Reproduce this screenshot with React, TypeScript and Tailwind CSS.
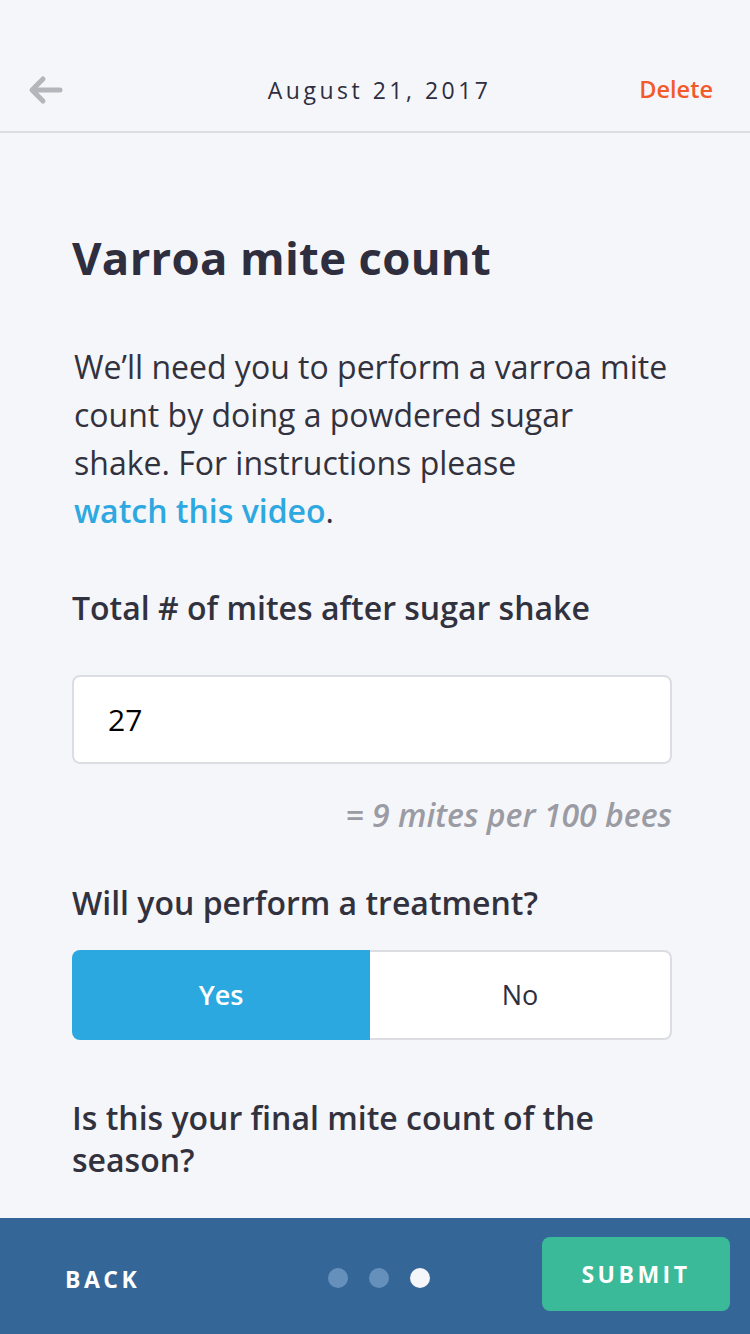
import { useState } from "react";

const Dot = ({ active }: { active?: boolean }) => (
  <span className={`block w-[20px] h-[20px] rounded-full ${active ? "bg-[#f5f6fa]" : "bg-[#6690bc]"}`} />
);

const App = () => {
  const [treat, setTreat] = useState(true);

  const seg = (on: boolean, side: "l" | "r") =>
    on
      ? `bg-[#2ca8e0] text-white font-semibold ${side === "l" ? "rounded-l-[8px]" : "rounded-r-[8px]"}`
      : `bg-white text-[#2e2e3f] border-2 border-[#dcdde3] ${side === "l" ? "rounded-l-[8px] border-r-0" : "rounded-r-[8px] border-l-0"}`;

  return (
    <div className="w-[750px] h-[1334px] bg-[#f5f6fa] flex flex-col font-['Open_Sans',sans-serif] text-[#32323f]">
      <header className="h-[133px] flex items-end border-b-2 border-[#dcdde3]">
        <div className="w-full h-[84px] flex items-center justify-between pl-[28px] pr-[37px] pt-[2px]">
          <svg width="36" height="30" viewBox="0 0 36 30" fill="none" stroke="#b4b6bb" strokeWidth="5" strokeLinecap="round" strokeLinejoin="round">
            <path d="M32 15H5M15 4L4 15l11 11" />
          </svg>
          <span className="text-[23px] font-medium tracking-[3.5px] ml-[56px] text-[#2e2e3f]">August 21, 2017</span>
          <span className="text-[23.5px] font-semibold text-[#f25a2a]">Delete</span>
        </div>
      </header>

      <main className="flex-1 px-[72px] pt-[92px]">
        <h1 className="text-[45.5px] font-bold leading-[64px] tracking-[0.3px] text-[#2e2e3f]">Varroa mite count</h1>
        <p className="mt-[54px] text-[32px] leading-[48px] text-[#32323f] pl-[2px]">
          We’ll need you to perform a varroa mite
          <br />
          count by doing a powdered sugar
          <br />
          shake. For instructions please
          <br />
          <a className="text-[#2ea8e0] font-semibold">watch this video</a>.
        </p>

        <label className="block mt-[49px] text-[32px] font-semibold leading-[48px]">Total # of mites after sugar shake</label>
        <div className="mt-[43px] w-[600px] h-[89px] bg-white border-2 border-[#dcdde3] rounded-[8px] flex items-center pl-[34px]">
          <span className="text-[30px] text-black">27</span>
        </div>
        <p className="mt-[27px] w-[600px] text-right text-[32px] italic font-semibold text-[#9a9ba3] leading-[48px]">
          = 9 mites per 100 bees
        </p>

        <p className="mt-[40px] text-[32px] font-semibold leading-[48px]">Will you perform a treatment?</p>
        <div className="mt-[23px] w-[600px] h-[90px] flex">
          <button onClick={() => setTreat(true)} className={`w-[298px] text-[27px] ${seg(treat, "l")}`}>
            Yes
          </button>
          <button onClick={() => setTreat(false)} className={`flex-1 text-[27px] ${seg(!treat, "r")}`}>
            No
          </button>
        </div>

        <p className="mt-[57px] text-[32px] font-semibold leading-[42px] w-[580px]">Is this your final mite count of the season?</p>
      </main>

      <footer className="h-[116px] bg-[#346698] flex items-center pl-[65px] pr-[20px]">
        <span className="text-[23px] font-bold tracking-[3.5px] text-white mt-[7px] w-[220px]">BACK</span>
        <div className="flex gap-[21px] items-center mt-[3px] ml-[43px]">
          <Dot />
          <Dot />
          <Dot active />
        </div>
        <button className="ml-auto w-[188px] h-[74px] rounded-[8px] bg-[#3aba98] text-white text-[23px] font-bold tracking-[3.5px] mb-[4px]">
          SUBMIT
        </button>
      </footer>
    </div>
  );
};

export default App;
